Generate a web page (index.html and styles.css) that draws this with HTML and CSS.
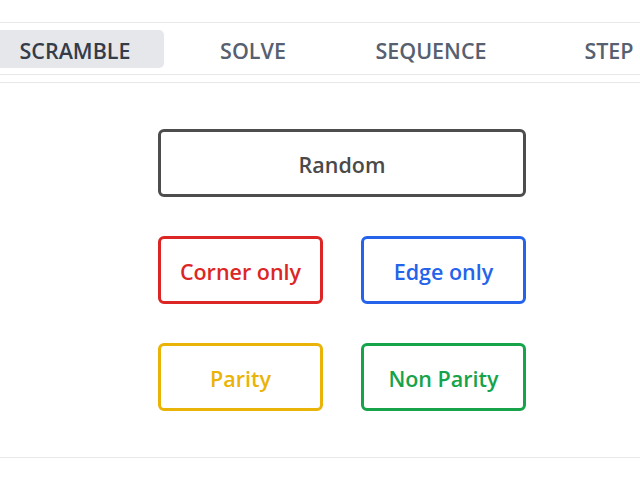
FILE: index.html
```html
<!DOCTYPE html>
<html>
<head>
<meta charset="utf-8">
<link rel="stylesheet" href="styles.css">
</head>
<body>
<div class="page">
  <nav class="tabbar">
    <div class="tabs">
      <div class="tab active">SCRAMBLE</div>
      <div class="tab">SOLVE</div>
      <div class="tab">SEQUENCE</div>
      <div class="tab">STEP</div>
    </div>
  </nav>
  <main class="content">
    <div class="grid">
      <button class="btn wide gray">Random</button>
      <button class="btn red">Corner only</button>
      <button class="btn blue">Edge only</button>
      <button class="btn yellow">Parity</button>
      <button class="btn green">Non Parity</button>
    </div>
  </main>
</div>
</body>
</html>
```

FILE: styles.css
```css
html, body {
  margin: 0;
  padding: 0;
  background: #ffffff;
  font-family: "Open Sans", "Noto Sans", sans-serif;
  overflow: hidden;
}

.page {
  width: 640px;
  height: 480px;
  padding-top: 22px;
  box-sizing: border-box;
}

.tabbar {
  border-top: 1.5px solid #e7e7e9;
  border-bottom: 1.5px solid #e7e7e9;
  padding: 7px 0 6px;
  overflow: hidden;
}

.tabs {
  display: flex;
  margin-left: -14px;
}

.tab {
  flex: 0 0 178px;
  height: 38px;
  display: flex;
  align-items: center;
  justify-content: center;
  padding-top: 2px;
  box-sizing: border-box;
  font-size: 21.5px;
  font-weight: 600;
  color: #566070;
  border-radius: 5px;
  white-space: nowrap;
}

.tab.active {
  background: #e5e7eb;
  color: #343c4a;
}

.content {
  margin-top: 7px;
  border-top: 1.5px solid #e7e7e9;
  border-bottom: 1.5px solid #e7e7e9;
  height: 376px;
  box-sizing: border-box;
  display: flex;
  justify-content: center;
  padding: 46px 0 0 44px;
}

.grid {
  display: grid;
  grid-template-columns: 165px 165px;
  column-gap: 38px;
  row-gap: 39px;
  align-content: start;
}

.btn {
  height: 68px;
  border: 3px solid;
  border-radius: 6px;
  background: #ffffff;
  font-family: "Open Sans", "Noto Sans", sans-serif;
  font-size: 21.5px;
  font-weight: 600;
  padding: 2px 0 0;
}

.wide {
  grid-column: 1 / span 2;
}

.gray { border-color: #4d4d4d; color: #4a4a4a; }
.red { border-color: #dc2626; color: #dc2626; }
.blue { border-color: #2563eb; color: #2563eb; }
.yellow { border-color: #eab308; color: #eab308; }
.green { border-color: #16a34a; color: #16a34a; }
```
